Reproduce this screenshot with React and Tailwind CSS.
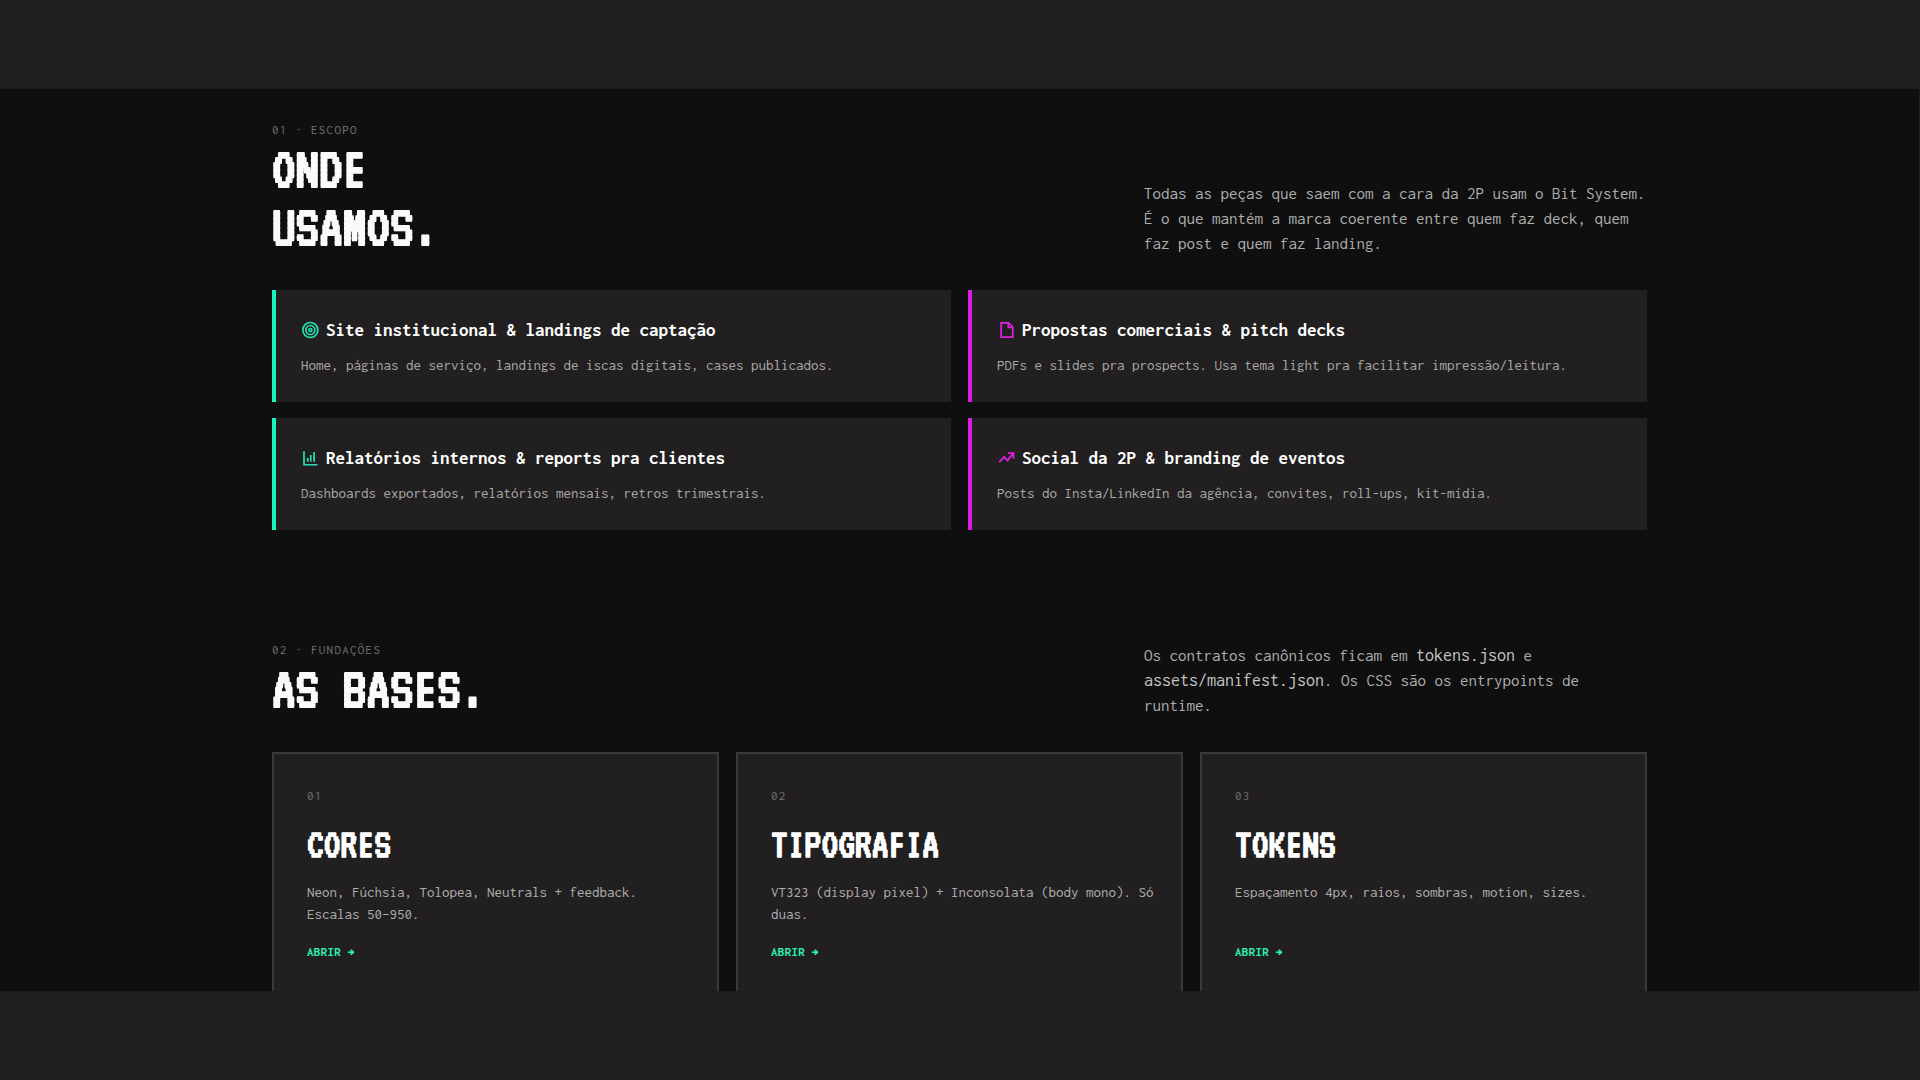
import React from "react";

const mono = "font-['Inconsolata','DejaVu_Sans_Mono',monospace]";
const display = "font-['VT323','Inconsolata','DejaVu_Sans_Mono',monospace]";

const scope = [
  { icon: "target", tone: "neon", title: "Site institucional & landings de captação", text: "Home, páginas de serviço, landings de iscas digitais, cases publicados." },
  { icon: "file", tone: "fuchsia", title: "Propostas comerciais & pitch decks", text: "PDFs e slides pra prospects. Usa tema light pra facilitar impressão/leitura." },
  { icon: "chart", tone: "neon", title: "Relatórios internos & reports pra clientes", text: "Dashboards exportados, relatórios mensais, retros trimestrais." },
  { icon: "trend", tone: "fuchsia", title: "Social da 2P & branding de eventos", text: "Posts do Insta/LinkedIn da agência, convites, roll-ups, kit-mídia." },
];

const bases = [
  { number: "01", title: "CORES", text: "Neon, Fúchsia, Tolopea, Neutrals + feedback. Escalas 50–950." },
  { number: "02", title: "TIPOGRAFIA", text: "VT323 (display pixel) + Inconsolata (body mono). Só duas." },
  { number: "03", title: "TOKENS", text: "Espaçamento 4px, raios, sombras, motion, sizes." },
];

const shapes = {
  target: (
    <>
      <circle cx="12.5" cy="12" r="10" />
      <circle cx="12.5" cy="12" r="6" />
      <circle cx="12.5" cy="12" r="2" />
    </>
  ),
  file: <path d="M5.5 2.5h10l5.5 5.5v13.5H5.5zM15 2.5v6h6" />,
  chart: <path d="M4 3v18h18M9 17v-5M13 17V8M17.5 17V4" />,
  trend: <path d="M3 17.5l6.5-7 4.5 5L21 6.5M14.5 5.5H22V13" />,
};

function Icon({ name }) {
  return (
    <svg viewBox="0 0 24 24" className="size-[18px] shrink-0" fill="none" stroke="currentColor" strokeWidth="2.3" aria-hidden="true">
      {shapes[name]}
    </svg>
  );
}

function SectionHeader({ eyebrow, title, children }) {
  return (
    <header className="flex items-end justify-between gap-8">
      <div>
        <p className="text-[13px] leading-5 tracking-widest text-[#737373]">{eyebrow}</p>
        <h2 className={`mt-px text-[59px] leading-[58px] font-bold text-[#fafafa] ${display}`}>{title}</h2>
      </div>
      <p className="w-full max-w-[503px] pb-px text-[17px] leading-[25px] text-[#adadad]">{children}</p>
    </header>
  );
}

function ScopeCard({ icon, tone, title, text }) {
  const neon = tone === "neon";
  return (
    <article className={`border-l-4 bg-[#221f20] px-[25px] pt-7 pb-[25px] ${neon ? "border-[#19f5c1]" : "border-[#e01ae0]"}`}>
      <h3 className="flex items-center gap-[7px] text-[19px] leading-6 font-bold text-white">
        <span className={neon ? "text-[#22e0b0]" : "text-[#e01fe0]"}>
          <Icon name={icon} />
        </span>
        {title}
      </h3>
      <p className="mt-[11px] text-[15px] leading-6 text-[#a8a8a8]">{text}</p>
    </article>
  );
}

function BaseCard({ number, title, text }) {
  return (
    <article className="flex flex-col border-2 border-[#3a3a3a] bg-[#221f20] pt-8 pr-6 pb-12 pl-[33px]">
      <p className="text-[13px] leading-5 tracking-widest text-[#737373]">{number}</p>
      <h3 className={`mt-5 text-[42px] leading-9 font-bold text-white ${display}`}>{title}</h3>
      <p className="mt-[19px] mb-[17px] text-[15px] leading-[22px] text-[#adadad]">{text}</p>
      <a href="#" className="mt-auto text-[13px] leading-5 font-bold tracking-wide text-[#2bf0b5]">
        ABRIR →
      </a>
    </article>
  );
}

export default function App() {
  return (
    <div className={`flex h-screen flex-col bg-[#1e1e1e] ${mono}`}>
      <div className="h-[89px] shrink-0" />
      <main className="mr-px min-h-0 flex-1 overflow-hidden bg-[#0f0f0f]">
        <div className="mx-auto max-w-[1375px] pt-[31px]">
          <section>
            <SectionHeader eyebrow="01 · ESCOPO" title={<>ONDE<br />USAMOS.</>}>
              Todas as peças que saem com a cara da 2P usam o Bit System. É o que mantém a marca coerente entre quem faz deck, quem faz post e quem faz landing.
            </SectionHeader>
            <div className="mt-[33px] grid grid-cols-2 gap-x-[17px] gap-y-4">
              {scope.map((item) => (
                <ScopeCard key={item.title} {...item} />
              ))}
            </div>
          </section>
          <section className="mt-[110px]">
            <SectionHeader eyebrow="02 · FUNDAÇÕES" title="AS BASES.">
              Os contratos canônicos ficam em <code className={`text-[18px] text-[#c4c4c4] ${mono}`}>tokens.json</code> e{" "}
              <code className={`text-[18px] text-[#c4c4c4] ${mono}`}>assets/manifest.json</code>. Os CSS são os entrypoints de runtime.
            </SectionHeader>
            <div className="mt-[33px] grid grid-cols-3 gap-[17px]">
              {bases.map((item) => (
                <BaseCard key={item.number} {...item} />
              ))}
            </div>
          </section>
        </div>
      </main>
      <div className="h-[89px] shrink-0" />
    </div>
  );
}
